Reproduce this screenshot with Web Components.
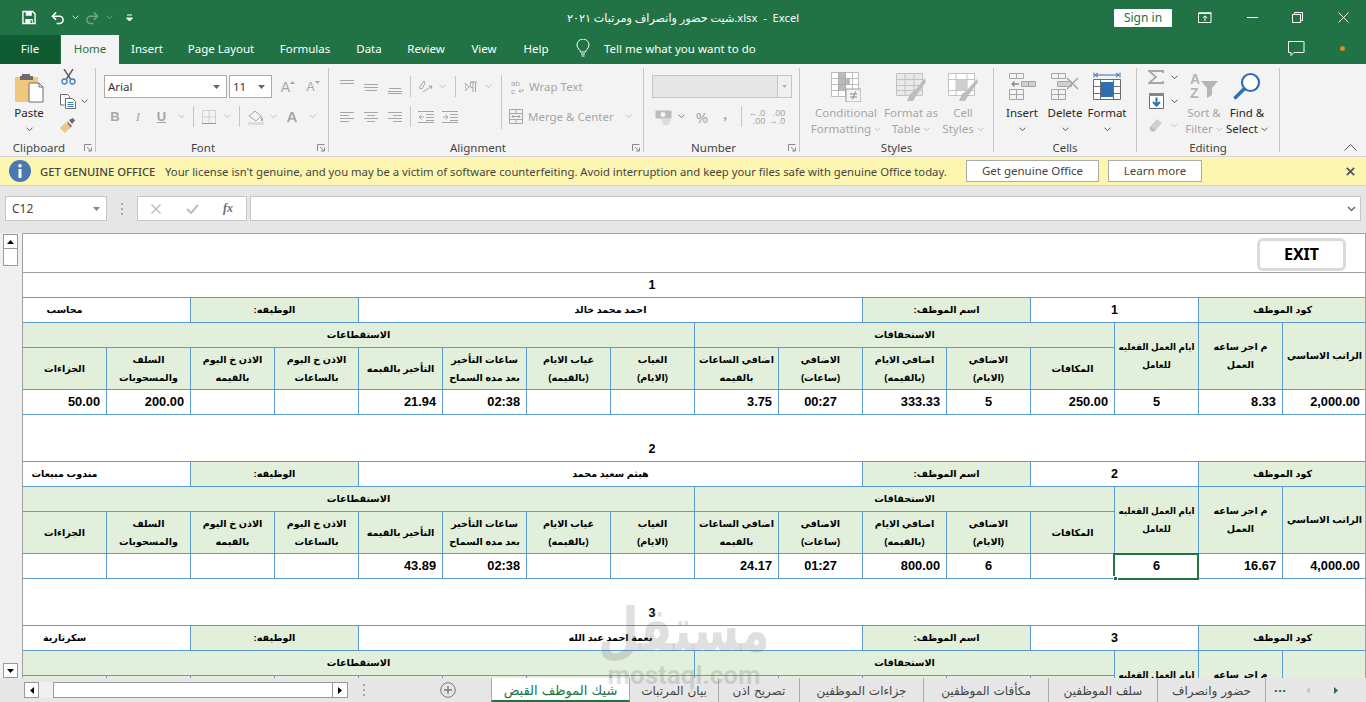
<!DOCTYPE html>
<html lang="en">
<head>
<meta charset="utf-8">
<title>Excel</title>
<style>
  html, body { margin: 0; height: 100%; }
  body {
    width: 1366px; height: 702px; overflow: hidden; position: relative;
    display: flex; flex-direction: column;
    font-family: "Noto Sans", "DejaVu Sans", sans-serif; font-size: 11.5px;
    background: #e6e6e6;
  }
</style>
</head>
<body>
<excel-titlebar></excel-titlebar>
<excel-tabstrip></excel-tabstrip>
<excel-ribbon></excel-ribbon>
<excel-msgbar></excel-msgbar>
<excel-formulabar></excel-formulabar>
<excel-sheet></excel-sheet>
<excel-sheettabs></excel-sheettabs>
<mostaql-mark></mostaql-mark>

<script>
// small drawing helpers
const chev = (c = "#a6a6a6") =>
  `<svg width="7" height="5" viewBox="0 0 7 5"><path d="M.5.7l3 3 3-3" fill="none" stroke="${c}"/></svg>`;
const lines = (w, h, arr, c = "#a6a6a6") =>
  `<svg width="${w}" height="${h}" viewBox="0 0 ${w} ${h}"><path d="${arr
    .map(([a, b, y]) => `M${a} ${y + 0.5}H${b}`)
    .join("")}" stroke="${c}" fill="none"/></svg>`;
const cell = (w, html = "", extra = "") =>
  `<span class="c" style="width:${w}px;${extra}">${html}</span>`;
const sep = (h = 21) => `<span class="sep" style="height:${h}px"></span>`;
const ARABIC = '"Liberation Sans", "DejaVu Sans", sans-serif';

class ExcelTitlebar extends HTMLElement {
  constructor() {
    super();
    this.attachShadow({ mode: "open" });
    this.shadowRoot.innerHTML = `
      <style>
        :host { display: block; height: 35px; background: #217346; color: #fff; flex: none; }
        .bar { display: flex; align-items: center; height: 35px; }
        .c { display: inline-flex; justify-content: center; align-items: center; flex: none; height: 35px; }
        .title { flex: none; width: 240px; margin-left: 423px; text-align: center; white-space: pre; font-size: 11.2px; direction: ltr; }
        .sign { flex: none; width: 58px; height: 18px; line-height: 18px; background: #fff; color: #217346; text-align: center; margin-left: 311px; border-radius: 1px; font-size: 12px; }
      </style>
      <div class="bar">
        ${cell(22)}
        ${cell(14, `<svg width="15" height="15" viewBox="0 0 15 15"><path d="M1 1h10.500L14 3.500V14H1z" fill="none" stroke="#fff" stroke-width="1.500"/><path d="M4 1h6.500v4.500H4zM3.500 9h8v5h-8z" fill="#fff"/><path d="M9 10.500h1.500v3H9z" fill="#217346"/></svg>`)}
        ${cell(15)}
        ${cell(14, `<svg width="15" height="14" viewBox="0 0 15 14"><path d="M5.500 1L1.500 5l4 4" fill="none" stroke="#fff" stroke-width="1.600"/><path d="M2 5h7a4 4 0 0 1 0 8H6" fill="none" stroke="#fff" stroke-width="1.600"/></svg>`)}
        ${cell(20, chev("#d5e5dc"))}
        ${cell(14, `<svg width="15" height="14" viewBox="0 0 15 14"><path d="M9.500 1l4 4-4 4" fill="none" stroke="#6fa488" stroke-width="1.600"/><path d="M13 5H6a4 4 0 0 0 0 8h3" fill="none" stroke="#6fa488" stroke-width="1.600"/></svg>`)}
        ${cell(20, chev("#6fa488"))}
        ${cell(21, `<svg width="7" height="8" viewBox="0 0 7 8"><path d="M1 1h5M.5 4h6L3.500 7z" stroke="#fff" fill="#fff"/></svg>`)}
        <span class="title">شيت حضور وانصراف ومرتبات ٢٠٢١.xlsx  -  Excel</span>
        <span class="sign">Sign in</span>
        ${cell(26)}
        ${cell(14, `<svg width="14" height="11" viewBox="0 0 14 11"><path d="M.5 1.500h12.500v9H.5z" fill="none" stroke="#fff"/><path d="M.5 1h13" stroke="#fff" stroke-width="1.500"/><path d="M7 9V4M4.800 6L7 3.800 9.200 6" fill="none" stroke="#fff"/></svg>`)}
        ${cell(34)}
        ${cell(12, `<svg width="11" height="1"><path d="M0 .5h11" stroke="#fff"/></svg>`)}
        ${cell(33)}
        ${cell(12, `<svg width="11" height="11" viewBox="0 0 11 11"><path d="M.5 2.500h8v8h-8zM2.500 2.500v-2h8v8h-2" fill="none" stroke="#fff"/></svg>`)}
        ${cell(34)}
        ${cell(12, `<svg width="11" height="11" viewBox="0 0 11 11"><path d="M.5.500l10 10M10.500.500l-10 10" fill="none" stroke="#fff"/></svg>`)}
      </div>`;
  }
}
customElements.define("excel-titlebar", ExcelTitlebar);

class ExcelTabstrip extends HTMLElement {
  constructor() {
    super();
    this.attachShadow({ mode: "open" });
    const tabs = [
      ["Home", 58], ["Insert", 56], ["Page Layout", 92], ["Formulas", 76],
      ["Data", 52], ["Review", 62], ["View", 54], ["Help", 50],
    ];
    this.shadowRoot.innerHTML = `
      <style>
        :host { display: block; height: 29px; background: #217346; color: #fff; flex: none; font-size: 11.5px; }
        .bar { display: flex; height: 29px; align-items: stretch; }
        .tab { flex: none; display: flex; align-items: center; justify-content: center; padding-bottom: 2px; box-sizing: border-box; }
        .file { width: 60px; background: #105c32; margin-right: 1px; }
        .on { background: #f3f3f3; color: #217346; }
        .bulb { width: 43px; display: flex; align-items: center; justify-content: center; flex: none; padding-bottom: 2px; box-sizing: border-box; }
        .tell { align-self: center; padding-bottom: 2px; }
        .right { margin-left: auto; display: flex; align-items: center; padding-bottom: 2px; }
        .dot { width: 5px; height: 5px; border-radius: 50%; background: #d98a2c; margin: 0 21px 0 35px; }
      </style>
      <div class="bar">
        <div class="tab file">File</div>
        ${tabs.map(([t, w], i) => `<div class="tab ${i ? "" : "on"}" style="width:${w}px">${t}</div>`).join("")}
        <span class="bulb"><svg width="14" height="19" viewBox="0 0 14 19"><path d="M4.500 13c0-2-3.500-3.500-3.500-7a6 6 0 0 1 12 0c0 3.500-3.500 5-3.500 7zM5 15h4M5.500 17h3" fill="none" stroke="#fff"/></svg></span>
        <span class="tell">Tell me what you want to do</span>
        <span class="right">
          <svg width="17" height="15" viewBox="0 0 17 15"><path d="M.5.500h15.500v11H6l-3 3v-3H.5z" fill="none" stroke="#fff"/></svg>
          <span class="dot"></span>
        </span>
      </div>`;
  }
}
customElements.define("excel-tabstrip", ExcelTabstrip);

class RibbonGroup extends HTMLElement {
  constructor() {
    super();
    this.attachShadow({ mode: "open" });
    const launcher = this.hasAttribute("launcher");
    this.shadowRoot.innerHTML = `
      <style>
        :host { display: block; flex: none; height: 84px; box-sizing: border-box; border-right: 1px solid #c6c6c6; position: relative; }
        .body { height: 72px; }
        .label { height: 12px; line-height: 16px; text-align: center; color: #444; font-size: 11.5px; padding-right: var(--label-shift, 0); }
        svg { position: absolute; right: 3px; bottom: 0; }
      </style>
      <div class="body"><slot></slot></div>
      <div class="label">${this.getAttribute("label")}</div>
      ${launcher ? `<svg width="8" height="8" viewBox="0 0 8 8"><path d="M.5 7V.5H7.500" fill="none" stroke="#8a8a8a"/><path d="M3 3l4 4M4 7h3.500V3.500" fill="none" stroke="#8a8a8a"/></svg>` : ""}`;
  }
}
customElements.define("ribbon-group", RibbonGroup);

class ExcelRibbon extends HTMLElement {
  constructor() {
    super();
    this.attachShadow({ mode: "open" });
    const dim = "#a6a6a6";
    const alignTop = lines(14, 15, [[0, 14, 1], [0, 14, 4]]);
    const alignMid = lines(14, 15, [[0, 14, 5], [0, 14, 8], [1, 13, 11]]);
    const alignBot = lines(14, 15, [[1, 13, 9], [0, 14, 12], [0, 14, 14]]);
    const left = lines(14, 12, [[0, 14, 1], [0, 9, 4], [0, 14, 7], [0, 9, 10]]);
    const mid = lines(14, 12, [[0, 14, 1], [3, 11, 4], [0, 14, 7], [3, 11, 10]]);
    const right = lines(14, 12, [[0, 14, 1], [5, 14, 4], [0, 14, 7], [5, 14, 10]]);
    const indent = (flip) => `<svg width="16" height="12" viewBox="0 0 16 12"><path d="M0 .5h16M8 3.500h8M8 6.500h8M8 9.500h8M0 11.500h16" stroke="${dim}" fill="none"/><path d="${flip ? "M1 6h5M3.500 3.500L6 6 3.500 8.500" : "M6 6H1M3.500 3.500L1 6l2.500 2.500"}" stroke="${dim}" fill="none"/></svg>`;
    const grid = (inner, w = 30, h = 30) => `<svg width="${w}" height="${h}" viewBox="0 0 ${w} ${h}">${inner}</svg>`;
    this.shadowRoot.innerHTML = `
      <style>
        :host { display: block; height: 93px; box-sizing: border-box; padding-top: 4px; background: #f3f3f3; flex: none; color: #444; border-bottom: 1px solid #d2d2d2; position: relative; }
        .wrap { display: flex; }
        .row { display: flex; height: 23px; align-items: center; }
        .c { display: inline-flex; flex: none; justify-content: center; align-items: center; height: 23px; white-space: nowrap; }
        .sep { display: block; width: 1px; background: #c6c6c6; }
        .dim { color: #a6a6a6; }
        .big { flex: none; display: flex; flex-direction: column; align-items: center; text-align: center; line-height: 16px; padding-top: 4px; white-space: nowrap; }
        .big > span { display: block; height: 16px; }
        .big .ic { height: 33px; display: flex; align-items: flex-start; justify-content: center; }
        .big .ch { display: inline-block; margin-left: 3px; line-height: 0; vertical-align: 1px; }
        .dk { color: #262626; }
        .box { box-sizing: border-box; height: 23px; border: 1px solid #ababab; background: #fff; display: flex; align-items: center; justify-content: space-between; padding: 0 6px 0 3px; color: #333; flex: none; }
        .small { display: flex; height: 24px; align-items: center; }
        .collapse { position: absolute; right: 9px; bottom: 5px; }
      </style>
      <div class="wrap">
        <ribbon-group label="Clipboard" launcher style="width:96px;--label-shift:17px">
          <div style="display:flex">
            <div class="big" style="width:58px">
              <div class="ic"><svg width="30" height="31" viewBox="0 0 30 31"><path d="M1 5h23v25H1z" fill="#f0c87d"/><path d="M8 2h8v2h3v4H6V4h2z" fill="#6f6a70"/><path d="M15 11h10l4 4v15H15z" fill="#fff" stroke="#6f6a70"/><path d="M25 11v4h4" fill="none" stroke="#6f6a70"/></svg></div>
              <span class="dk">Paste</span>
              <span style="display:flex;align-items:center">${chev("#555")}</span>
            </div>
            <div style="margin-top:-3px">
              <div class="small">${cell(20, `<svg width="15" height="16" viewBox="0 0 15 16"><path d="M3 0l6.500 10M12 0L5.500 10" stroke="#5f5a60" stroke-width="1.400" fill="none"/><circle cx="3.500" cy="12.500" r="2.500" fill="none" stroke="#3f7ec0" stroke-width="1.300"/><circle cx="11.500" cy="12.500" r="2.500" fill="none" stroke="#3f7ec0" stroke-width="1.300"/></svg>`)}</div>
              <div class="small">${cell(20, `<svg width="16" height="15" viewBox="0 0 16 15"><path d="M.5.500h7l2 2v2M.5.500v10.500h4" fill="#fff" stroke="#6f6a70"/><path d="M5.500 4.500h7l3 3v7h-10z" fill="#fff" stroke="#6f6a70"/><path d="M7.500 8.500h6M7.500 10.500h6M7.500 12.500h6" stroke="#3f7ec0"/></svg>`)}${cell(13, chev("#555"))}</div>
              <div class="small">${cell(20, `<svg width="16" height="15" viewBox="0 0 16 15"><path d="M9 2l4-2 2 2.500-3 3.500z" fill="#6f6a70"/><path d="M7 3l5 5-3 3z" fill="#6f6a70"/><path d="M6 4l4.500 5L5 15 0 10z" fill="#f0c87d"/></svg>`)}</div>
            </div>
          </div>
        </ribbon-group>

        <ribbon-group label="Font" launcher style="width:233px;--label-shift:18px">
          <div style="padding:7px 0 0 8px">
            <div class="row">
              <div class="box" style="width:123px"><span>Arial</span><svg width="7" height="4"><path d="M0 0h7L3.500 4z" fill="#666"/></svg></div>
              <div class="box" style="width:43px;margin-left:2px"><span>11</span><svg width="7" height="4"><path d="M0 0h7L3.500 4z" fill="#666"/></svg></div>
              ${cell(8)}
              ${cell(16, `<span class="dim" style="font-size:14px;font-family:'Liberation Sans'">A</span><svg width="5" height="3" style="margin:-9px 0 0 0"><path d="M0 3h5L2.500 0z" fill="#a6a6a6"/></svg>`)}
              ${cell(9)}
              ${cell(16, `<span class="dim" style="font-size:12px;font-family:'Liberation Sans'">A</span><svg width="5" height="3" style="margin:-9px 0 0 0"><path d="M0 0h5L2.500 3z" fill="#a6a6a6"/></svg>`)}
            </div>
            <div class="row" style="margin-top:7px">
              ${cell(22, `<b class="dim" style="font:bold 13px 'Liberation Sans'">B</b>`)}
              ${cell(24, `<i class="dim" style="font:italic 13px 'Liberation Serif'">I</i>`)}
              ${cell(23, `<u class="dim" style="font:bold 13px 'Liberation Sans'">U</u>`)}
              ${cell(17, chev("#c0c0c0"))}
              ${cell(6, sep())}
              ${cell(25, `<svg width="14" height="14" viewBox="0 0 14 14"><path d="M.5.500h13v13H.5zM7 .500v13M.5 7h13" stroke="#b0b0b0" stroke-dasharray="1 1" fill="none"/><path d="M0 13.500h14" stroke="#999"/></svg>`)}
              ${cell(12, chev("#c0c0c0"))}
              ${cell(12, sep())}
              ${cell(21, `<svg width="16" height="16" viewBox="0 0 16 16"><path d="M1 7l6-5 6 5-5 5z" fill="none" stroke="#a6a6a6"/><path d="M13 7l2 3v2h-2z" fill="#a6a6a6"/><path d="M0 13h16v3H0z" fill="#dcdcdc"/></svg>`)}
              ${cell(14, chev("#c0c0c0"))}
              ${cell(24, `<span class="dim" style="font:bold 15px 'Liberation Sans'">A</span>`)}
              ${cell(16, chev("#c0c0c0"))}
            </div>
          </div>
        </ribbon-group>

        <ribbon-group label="Alignment" launcher style="width:315px;--label-shift:16px">
          <div style="padding:7px 0 0 6px">
            <div class="row">
              ${cell(24, alignTop)}${cell(24, alignMid)}${cell(24, alignBot)}
              ${cell(7, sep())}
              ${cell(23, `<svg width="16" height="16" viewBox="0 0 16 16"><path d="M1 9l5-7 1 2-3 6zM5 13l9-6" stroke="#a6a6a6" fill="none"/><path d="M14 7l-3 0M14 7l-1 3" stroke="#a6a6a6" fill="none"/></svg>`)}
              ${cell(11, chev("#c0c0c0"))}
              ${cell(15, sep())}
              ${cell(17, `<svg width="13" height="12" viewBox="0 0 13 12"><path d="M5 1h7M8 1v10M10.500 1v10M8 1a3 3 0 0 0 0 6M0 2l4 4-4 4z" stroke="#a6a6a6" fill="none"/></svg>`)}
              ${cell(17, chev("#c0c0c0"))}
              ${cell(9, sep(54), "align-items:flex-start;height:23px")}
              <span class="c" style="width:139px;justify-content:flex-start;padding-left:5px;box-sizing:border-box">
                <svg width="14" height="16" viewBox="0 0 14 16"><text x="0" y="7" font-size="8" fill="#a6a6a6" font-family="Liberation Sans">ab</text><text x="0" y="15" font-size="8" fill="#a6a6a6" font-family="Liberation Sans">c</text><path d="M12 10v2H8M9.500 10.500L8 12l1.500 1.500" fill="none" stroke="#a6a6a6"/></svg>
                <span class="dim" style="margin-left:4px">Wrap Text</span>
              </span>
            </div>
            <div class="row" style="margin-top:7px">
              ${cell(24, left)}${cell(24, mid)}${cell(24, right)}
              ${cell(7, sep())}
              ${cell(24, indent(false))}${cell(24, indent(true))}
              ${cell(47)}
              <svg width="14" height="15" viewBox="0 0 14 15" style="flex:none"><path d="M.5.500h13v14H.5zM.5 4.500h13M.5 10.500h13M7 .500v4M7 10.500v4" fill="none" stroke="#a6a6a6"/><path d="M3 7.500h8M4.500 6L3 7.500 4.500 9M9.500 6L11 7.500 9.500 9" fill="none" stroke="#a6a6a6"/></svg>
              <span class="dim" style="margin-left:5px;width:93px;flex:none;white-space:nowrap">Merge &amp; Center</span>
              ${cell(14, chev("#c0c0c0"))}
            </div>
          </div>
        </ribbon-group>

        <ribbon-group label="Number" launcher style="width:156px;--label-shift:16px">
          <div style="padding:7px 0 0 8px">
            <div class="row">
              <div class="box" style="width:140px;background:#e6e6e6;border-color:#c6c6c6;padding:0;justify-content:flex-end">
                <span style="width:13px;height:21px;background:#f0f0f0;border-left:1px solid #c6c6c6;display:flex;align-items:center;justify-content:center"><svg width="5" height="3"><path d="M0 0h5L2.500 3z" fill="#b5b5b5"/></svg></span>
              </div>
            </div>
            <div class="row" style="margin-top:7px">
              ${cell(22, `<svg width="17" height="16" viewBox="0 0 17 16"><path d="M.5 1.500h16v8H.5z" fill="#bdbdbd"/><circle cx="8" cy="5.500" r="2.500" fill="#f3f3f3"/><path d="M6 11h10M7 13h8M8 15h6" stroke="#c6c6c6"/></svg>`)}
              ${cell(14, chev("#777"))}
              ${cell(28, `<span class="dim" style="font-size:15px">%</span>`)}
              ${cell(18, `<span class="dim" style="font:bold 15px 'Liberation Serif';margin-top:-5px">,</span>`)}
              ${cell(14, sep())}
              ${cell(18, `<span class="dim" style="font:9px/8px 'Liberation Sans';text-align:right">←.0<br>.00</span>`)}
              ${cell(22, `<span class="dim" style="font:9px/8px 'Liberation Sans';text-align:right">.00<br>→.0</span>`)}
            </div>
          </div>
        </ribbon-group>

        <ribbon-group label="Styles" style="width:194px">
          <div style="display:flex;padding-left:12px">
            <div class="big dim" style="width:68px">
              <div class="ic">${grid(`<path d="M.5.500h27v24H.5z M.5 6.500h27M.5 12.500h27M.5 18.500h27M7.500.500v24M14.500.500v24M21.500.500v24" fill="#fff" stroke="#bdbdbd"/><path d="M7 .500h8v6h4v6h-4v6H7z" fill="#a9a9a9" opacity=".8"/><path d="M15 17h15v13H15z" fill="#f3f3f3" stroke="#9c9c9c"/><path d="M19 22h7M19 25h7M24.500 19.500l-3 8" stroke="#8a8a8a" fill="none"/>`)}</div>
              <span>Conditional</span>
              <span>Formatting<span class="ch">${chev("#c0c0c0")}</span></span>
            </div>
            <div class="big dim" style="width:62px">
              <div class="ic">${grid(`<path d="M.5 1.500h26v22H.5zM.5 7.500h26M.5 13.500h26M.5 18.500h26M9 1.500v22M18 1.500v22" fill="#e9e9e9" stroke="#c2c2c2"/><path d="M29 6L18 19l-4 3-3 7h6l3-5 10-14z" fill="#bdbdbd"/>`)}</div>
              <span>Format as</span>
              <span>Table<span class="ch">${chev("#c0c0c0")}</span></span>
            </div>
            <div class="big dim" style="width:42px">
              <div class="ic">${grid(`<path d="M.5 1.500h26v22H.5zM.5 7.500h26M.5 18.500h26M8 1.500v22M19 1.500v22" fill="#fff" stroke="#c2c2c2"/><path d="M8 7.500h11v11H8z" fill="#cfcfcf"/><path d="M29 7L18 19l-4 3-3 7h6l3-5 10-14z" fill="#bdbdbd"/>`)}</div>
              <span>Cell</span>
              <span>Styles<span class="ch">${chev("#c0c0c0")}</span></span>
            </div>
          </div>
        </ribbon-group>

        <ribbon-group label="Cells" style="width:143px">
          <div style="display:flex;padding-left:7px">
            <div class="big" style="width:42px">
              <div class="ic">${grid(`<path d="M.5 1.500h14v5H.5zM7.500 1.500v5M.5 17.500h14v10H.5zM.5 22.500h14M7.500 17.500v10" fill="none" stroke="#a6a6a6"/><path d="M12.500 9.500h14v5h-14zM19.500 9.500v5" fill="#d0d0d0" stroke="#a6a6a6"/><path d="M10 12H3M5.500 9.500L3 12l2.500 2.500" fill="none" stroke="#8a8a8a" stroke-width="1.300"/>`, 27, 28)}</div>
              <span class="dk">Insert</span>
              <span style="display:flex;align-items:center">${chev("#555")}</span>
            </div>
            <div class="big" style="width:44px">
              <div class="ic">${grid(`<path d="M.5 1.500h14v5H.5zM7.500 1.500v5M.5 17.500h14v10H.5zM.5 22.500h14M7.500 17.500v10" fill="none" stroke="#a6a6a6"/><path d="M6.500 9.500h14v5h-14z" fill="#d0d0d0" stroke="#a6a6a6"/><path d="M16 6l11 11M27 6L16 17" stroke="#a6a6a6" stroke-width="1.500"/>`, 28, 28)}</div>
              <span class="dk">Delete</span>
              <span style="display:flex;align-items:center">${chev("#555")}</span>
            </div>
            <div class="big" style="width:40px">
              <div class="ic">${grid(`<path d="M1 .500v5M27 .500v5M2 3h24M5 1L2 3l3 2M23 1l3 2-3 2" fill="none" stroke="#2f6fb0"/><path d="M.5 7.500h27v20H.5zM.5 14.500h27M.5 21.500h27M7.500 7.500v20M20.500 7.500v20" fill="#fff" stroke="#6f6a70"/><path d="M8 10h12v15H8z" fill="#2f6fb0"/>`, 28, 31)}</div>
              <span class="dk">Format</span>
              <span style="display:flex;align-items:center">${chev("#555")}</span>
            </div>
          </div>
        </ribbon-group>

        <ribbon-group label="Editing" style="width:143px">
          <div style="display:flex;padding-left:8px">
            <div style="margin-top:-3px">
              <div class="small">${cell(22, `<svg width="16" height="14" viewBox="0 0 16 14"><path d="M15 3V1H1l7 6-7 6h14v-2" fill="none" stroke="#a6a6a6" stroke-width="1.800"/></svg>`)}${cell(15, chev("#555"))}</div>
              <div class="small">${cell(22, `<svg width="15" height="16" viewBox="0 0 15 16"><path d="M.5 2.500h14v13H.5z" fill="#fff" stroke="#6f6a70"/><path d="M0 0h15v3H0z" fill="#8a8588"/><path d="M7.500 4.500v8M4 9l3.500 3.500L11 9" fill="none" stroke="#2f6fb0" stroke-width="2"/></svg>`)}${cell(15, chev("#555"))}</div>
              <div class="small">${cell(22, `<svg width="14" height="14" viewBox="0 0 14 14"><path d="M8 1l5 4-6 7-5-4z" fill="#d0d0d0"/><path d="M2 8l5 4-1.500 1.500h-3L.5 10z" fill="#bdbdbd"/></svg>`)}${cell(15, chev("#c0c0c0"))}</div>
            </div>
            <div class="big dim" style="width:42px;margin-left:1px">
              <div class="ic"><svg width="30" height="29" viewBox="0 0 30 29"><text x="1" y="12" font-size="14" font-weight="bold" fill="#b5b5b5" font-family="Liberation Sans">A</text><text x="1" y="26" font-size="14" font-weight="bold" fill="#b5b5b5" font-family="Liberation Sans">Z</text><path d="M12 9h17l-6 7v7l-5 3V16z" fill="#b5b5b5"/></svg></div>
              <span>Sort &amp;</span>
              <span>Filter<span class="ch">${chev("#c0c0c0")}</span></span>
            </div>
            <div class="big dk" style="width:44px">
              <div class="ic"><svg width="28" height="28" viewBox="0 0 28 28"><circle cx="17.500" cy="10.500" r="8.500" fill="#fff" stroke="#2f6fb0" stroke-width="2.200"/><path d="M11 17L2.500 25.500" stroke="#2f6fb0" stroke-width="3.500" stroke-linecap="round"/></svg></div>
              <span>Find &amp;</span>
              <span>Select<span class="ch">${chev("#555")}</span></span>
            </div>
          </div>
        </ribbon-group>
      </div>
      <svg class="collapse" width="13" height="7" viewBox="0 0 13 7"><path d="M.5 6.500l6-6 6 6" fill="none" stroke="#555"/></svg>`;
  }
}
customElements.define("excel-ribbon", ExcelRibbon);

class ExcelMsgbar extends HTMLElement {
  constructor() {
    super();
    this.attachShadow({ mode: "open" });
    this.shadowRoot.innerHTML = `
      <style>
        :host { display: block; height: 29px; box-sizing: border-box; background: #fdf6b0; border-bottom: 1px solid #e6dc82; flex: none; color: #444; font-size: 11.27px; }
        .bar { display: flex; align-items: center; height: 28px; padding-left: 9px; white-space: nowrap; }
        .i { width: 22px; height: 22px; flex: none; }
        .t { font-weight: 500; margin-left: 9px; width: 125px; flex: none; }
        .m { width: 801px; flex: none; }
        .b { flex: none; box-sizing: border-box; height: 22px; line-height: 20px; border: 1px solid #ababab; background: #fff; text-align: center; font-size: 11.5px; }
        .x { margin-left: 144px; flex: none; }
      </style>
      <div class="bar">
        <svg class="i" viewBox="0 0 22 22"><circle cx="11" cy="11" r="11" fill="#4a78b0"/><path d="M9.500 9h3v9h-3z" fill="#fff"/><circle cx="11" cy="5.800" r="1.800" fill="#fff"/></svg>
        <span class="t">GET GENUINE OFFICE</span>
        <span class="m">Your license isn't genuine, and you may be a victim of software counterfeiting. Avoid interruption and keep your files safe with genuine Office today.</span>
        <span class="b" style="width:133px">Get genuine Office</span>
        <span class="b" style="width:94px;margin-left:9px">Learn more</span>
        <svg class="x" width="9" height="9" viewBox="0 0 9 9"><path d="M.8.800l7.400 7.400M8.200.800L.8 8.200" stroke="#555" stroke-width="1.800"/></svg>
      </div>`;
  }
}
customElements.define("excel-msgbar", ExcelMsgbar);

class ExcelFormulabar extends HTMLElement {
  constructor() {
    super();
    this.attachShadow({ mode: "open" });
    this.shadowRoot.innerHTML = `
      <style>
        :host { display: block; height: 47px; box-sizing: border-box; padding: 10px 5px 0; background: #e6e6e6; flex: none; color: #444; }
        .bar { display: flex; height: 25px; }
        .box { box-sizing: border-box; height: 25px; background: #fff; border: 1px solid #c6c6c6; display: flex; align-items: center; flex: none; }
        .name { width: 102px; justify-content: space-between; padding: 0 6px 0 6px; }
        .dots { width: 30px; flex: none; display: flex; align-items: center; justify-content: center; }
        .fx { width: 110px; }
        .c { display: inline-flex; justify-content: center; align-items: center; flex: none; }
        .input { width: 1111px; margin-left: 3px; justify-content: flex-end; padding-right: 4px; }
      </style>
      <div class="bar">
        <div class="box name"><span style="font-size:12px">C12</span><svg width="7" height="4"><path d="M0 0h7L3.500 4z" fill="#888"/></svg></div>
        <span class="dots"><svg width="2" height="12"><path d="M0 0h2v2H0zM0 5h2v2H0zM0 10h2v2H0z" fill="#a6a6a6"/></svg></span>
        <div class="box fx">
          ${cell(36, `<svg width="10" height="10" viewBox="0 0 10 10"><path d="M.5.500l9 9M9.500.500l-9 9" stroke="#bdbdbd" stroke-width="1.500"/></svg>`)}
          ${cell(36, `<svg width="13" height="10" viewBox="0 0 13 10"><path d="M1 5l4 4 7-8" fill="none" stroke="#bdbdbd" stroke-width="2"/></svg>`)}
          ${cell(36, `<i style="font:italic bold 12px 'Liberation Serif';color:#6f6a70">fx</i>`)}
        </div>
        <div class="box input"><svg width="9" height="6" viewBox="0 0 9 6"><path d="M1 1l3.500 3.500L8 1" fill="none" stroke="#6f6a70" stroke-width="1.500"/></svg></div>
      </div>`;
  }
}
customElements.define("excel-formulabar", ExcelFormulabar);

// one employee's block on the pay sheet: 5 rows on the 16-column grid (rtl)
class PayBlock extends HTMLElement {
  constructor() {
    super();
    this.attachShadow({ mode: "open" });
  }
  connectedCallback() {
    const d = JSON.parse(this.getAttribute("data"));
    const heads = [
      "الراتب الاساسي", "م اجر ساعه<br>العمل", "ايام العمل القعليه<br>للعامل",
    ];
    const subs = [
      "المكافات", "الاضافي<br>(الايام)", "اضافي الايام<br>(بالقيمه)", "الاضافي<br>(ساعات)",
      "اضافي الساعات<br>بالقيمه", "الغياب<br>(الايام)", "غياب الايام<br>(بالقيمه)",
      "ساعات التأخير<br>بعد مده السماح", "التأخير بالقيمه", "الاذن خ اليوم<br>بالساعات",
      "الاذن خ اليوم<br>بالقيمه", "السلف<br>والمسحوبات", "الجزاءات",
    ];
    const centred = [2, 4, 6];
    this.shadowRoot.innerHTML = `
      <style>
        :host { display: block; }
        .g {
          display: grid; direction: rtl; width: 1344px;
          grid-template-columns: repeat(16, 84px);
          grid-template-rows: 25px 25px 25px 42px 25px;
          margin-bottom: 22px;
          font: bold 9.6px/18px ${ARABIC}; color: #000;
        }
        .g > div {
          box-sizing: border-box; border-left: 1px solid #5b9bd5; border-bottom: 1px solid #5b9bd5;
          display: flex; align-items: center; justify-content: center; text-align: center; overflow: hidden; white-space: nowrap;
        }
        .g > .n { border-left: 0; font-size: 12.500px; direction: ltr; }
        .g > .blank { border-left: 0; }
        .h { background: #e2efda; }
        .g > .v { font-size: 12.800px; direction: ltr; }
        .g > .v span { padding-right: 6px; display: block; width: 100%; text-align: right; box-sizing: border-box; }
        .g > .v.mid span { text-align: center; padding-right: 0; }
        .s2 { grid-column: span 2; }
        .g > .job { justify-content: center; padding-right: 84px; }
        .g > .sel { position: relative; overflow: visible; outline: 2px solid #217346; outline-offset: -1px; z-index: 1; }
        .sel i { position: absolute; left: -2px; bottom: -3px; width: 5px; height: 5px; background: #217346; border: 1px solid #fff; box-sizing: border-box; }
      </style>
      <div class="g">
        <div class="blank"></div>
        <div class="n" style="grid-column:span 15">${d.no}</div>
        <div class="h s2">كود الموظف</div>
        <div class="s2" style="font-size:12.500px">${d.no}</div>
        <div class="h s2">اسم الموظف:</div>
        <div style="grid-column:span 6">${d.name}</div>
        <div class="h s2">الوظيفه:</div>
        <div class="s2 job">${d.job}</div>
        ${heads.map((t, i) => `<div class="h" style="grid-row:span 2;${i === 2 ? "font-size:8.800px" : ""}"><span>${t}</span></div>`).join("")}
        <div class="h" style="grid-column:span 5">الاستحقاقات</div>
        <div class="h" style="grid-column:span 8">الاستقطاعات</div>
        ${subs.map((t) => `<div class="h"><span>${t}</span></div>`).join("")}
        ${d.vals.map((v, i) => `<div class="v ${centred.includes(i) ? "mid" : ""} ${d.sel === i ? "sel" : ""}"><span>${v}</span>${d.sel === i ? "<i></i>" : ""}</div>`).join("")}
      </div>`;
  }
}
customElements.define("pay-block", PayBlock);

class ExcelSheet extends HTMLElement {
  constructor() {
    super();
    this.attachShadow({ mode: "open" });
    const blocks = [
      { no: 1, name: "احمد محمد خالد", job: "محاسب",
        vals: ["2,000.00", "8.33", "5", "250.00", "5", "333.33", "00:27", "3.75", "", "", "02:38", "21.94", "", "", "200.00", "50.00"] },
      { no: 2, name: "هيثم سعيد محمد", job: "مندوب مبيعات", sel: 2,
        vals: ["4,000.00", "16.67", "6", "", "6", "800.00", "01:27", "24.17", "", "", "02:38", "43.89", "", "", "", ""] },
      { no: 3, name: "نعمة احمد عبد الله", job: "سكرتارية",
        vals: ["", "", "", "", "", "", "", "", "", "", "", "", "", "", "", ""] },
    ];
    this.shadowRoot.innerHTML = `
      <style>
        :host { display: flex; height: 445px; flex: none; background: #e6e6e6; }
        .vbar { width: 22px; flex: none; display: flex; flex-direction: column; background: #f0f0f0; padding: 1px 4px 0 3px; box-sizing: border-box; }
        .btn { height: 15px; box-sizing: border-box; border: 1px solid #9a9a9a; background: #fff; display: flex; align-items: center; justify-content: center; flex: none; }
        .thumb { height: 17px; box-sizing: border-box; border: 1px solid #9a9a9a; border-top: 0; background: #fff; flex: none; }
        .pane { flex: 1; box-sizing: border-box; border-top: 1px solid #a0a0a0; border-left: 1px solid #a0a0a0; border-right: 1px solid #a0a0a0; background: #fff; overflow: hidden; }
        .top { height: 39px; box-sizing: border-box; border-bottom: 1px solid #a0a0a0; display: flex; justify-content: flex-end; padding: 4px 19px 0 0; }
        .exit { box-sizing: border-box; width: 89px; height: 33px; border: 3px solid #dadada; border-radius: 6px; padding-bottom: 2px; display: flex; align-items: center; justify-content: center; font: bold 16px "Noto Sans", sans-serif; color: #000; }
        .rows { margin-left: -1px; }
      </style>
      <div class="vbar">
        <div class="btn"><svg width="7" height="4"><path d="M0 4h7L3.500 0z" fill="#000"/></svg></div>
        <div class="thumb"></div>
        <div style="flex:1"></div>
        <div class="btn"><svg width="7" height="4"><path d="M0 0h7L3.500 4z" fill="#000"/></svg></div>
      </div>
      <div class="pane">
        <div class="top"><div class="exit">EXIT</div></div>
        <div class="rows">
          ${blocks.map((b) => `<pay-block data='${JSON.stringify(b)}'></pay-block>`).join("")}
        </div>
      </div>`;
  }
}
customElements.define("excel-sheet", ExcelSheet);

class ExcelSheettabs extends HTMLElement {
  constructor() {
    super();
    this.attachShadow({ mode: "open" });
    const tabs = [
      ["بيان المرتبات", 89], ["تصريح اذن", 81], ["جزاءات الموظفين", 124],
      ["مكأفات الموظفين", 125], ["سلف الموظفين", 109], ["حضور وانصراف", 108],
    ];
    this.shadowRoot.innerHTML = `
      <style>
        :host { display: block; height: 24px; flex: none; background: #e6e6e6; }
        .bar { display: flex; height: 24px; align-items: stretch; font: 12px "DejaVu Sans", sans-serif; color: #444; }
        .c { display: inline-flex; justify-content: center; align-items: center; flex: none; }
        .btn { width: 15px; height: 16px; margin-top: 4px; box-sizing: border-box; border: 1px solid #9a9a9a; background: #fff; display: flex; align-items: center; justify-content: center; flex: none; }
        .track { width: 14px; height: 16px; margin-top: 4px; background: #f0f0f0; flex: none; }
        .thumb { width: 279px; height: 16px; margin-top: 4px; box-sizing: border-box; border: 1px solid #9a9a9a; border-right: 0; background: #fff; flex: none; }
        .tab { flex: none; box-sizing: border-box; padding-top: 2px; display: flex; align-items: center; justify-content: center; border-right: 1px solid #ababab; white-space: nowrap; }
        .on { width: 139px; background: #fff; color: #217346; font-size: 13px; border-left: 1px solid #ababab; border-right: 1px solid #ababab; border-bottom: 2px solid #217346; }
        .more { width: 28px; color: #217346; font-weight: bold; font-size: 11px; }
      </style>
      <div class="bar">
        ${cell(24)}
        <div class="btn"><svg width="4" height="7"><path d="M4 0v7L0 3.500z" fill="#000"/></svg></div>
        <div class="track"></div>
        <div class="thumb"></div>
        <div class="btn" style="width:16px"><svg width="4" height="7"><path d="M0 0v7l4-3.500z" fill="#000"/></svg></div>
        ${cell(32, `<svg width="2" height="12"><path d="M0 0h2v2H0zM0 5h2v2H0zM0 10h2v2H0z" fill="#a6a6a6"/></svg>`)}
        ${cell(86, `<svg width="16" height="16" viewBox="0 0 16 16" style="margin-left:50px"><circle cx="8" cy="8" r="7.300" fill="none" stroke="#777"/><path d="M8 4v8M4 8h8" stroke="#777" stroke-width="1.300"/></svg>`)}
        ${cell(25)}
        <div class="tab on">شيك الموظف القبض</div>
        ${tabs.map(([t, w]) => `<div class="tab" style="width:${w}px">${t}</div>`).join("")}
        <div class="c more" style="padding-bottom:4px">...</div>
        ${cell(28, `<svg width="4" height="7"><path d="M4 0v7L0 3.500z" fill="#c6c6c6"/></svg>`)}
        ${cell(27, `<svg width="4" height="7"><path d="M0 0v7l4-3.500z" fill="#217346"/></svg>`)}
      </div>`;
  }
}
customElements.define("excel-sheettabs", ExcelSheettabs);

class MostaqlMark extends HTMLElement {
  constructor() {
    super();
    this.attachShadow({ mode: "open" });
    this.shadowRoot.innerHTML = `
      <style>
        :host { position: absolute; left: 596px; top: 606px; width: 176px; text-align: center; pointer-events: none; color: rgba(110,110,110,.22); }
        .ar { font: bold 47px/58px "DejaVu Sans", sans-serif; white-space: nowrap; transform: scaleY(1.3); transform-origin: 50% 80%; }
        .en { font: bold 26px/24px "Roboto", sans-serif; margin-top: -1px; }
      </style>
      <div class="ar">مستقل</div>
      <div class="en">mostaql.com</div>`;
  }
}
customElements.define("mostaql-mark", MostaqlMark);
</script>
</body>
</html>
